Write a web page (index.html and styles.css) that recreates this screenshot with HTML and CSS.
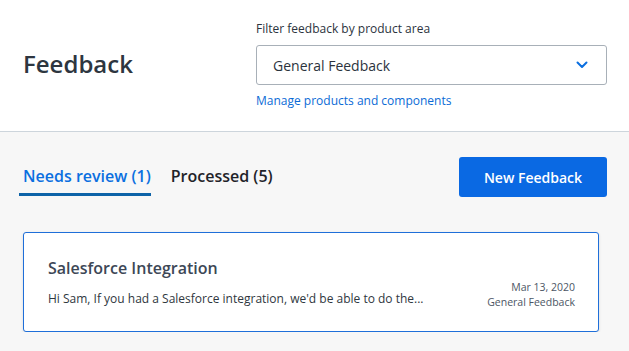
FILE: index.html
```html
<!DOCTYPE html>
<html lang="en">
<head>
  <meta charset="UTF-8">
  <meta name="viewport" content="width=device-width, initial-scale=1.0">
  <title>Feedback</title>
  <link rel="stylesheet" href="styles.css">
</head>
<body>
  <header class="page-header">
    <h1 class="page-title">Feedback</h1>
    <div class="filter">
      <label class="filter-label" for="area">Filter feedback by product area</label>
      <div class="select-box" id="area">
        <span>General Feedback</span>
        <svg class="chevron" width="12" height="8" viewBox="0 0 12 8">
          <path d="M1.5 1.5 L6 6 L10.5 1.5" fill="none" stroke="#0b6fe0" stroke-width="2" stroke-linecap="round" stroke-linejoin="round"/>
        </svg>
      </div>
      <a href="#" class="filter-link">Manage products and components</a>
    </div>
  </header>

  <main class="content">
    <div class="toolbar">
      <nav class="tabs">
        <a href="#" class="tab active">Needs review (1)</a>
        <a href="#" class="tab">Processed (5)</a>
      </nav>
      <button type="button" class="new-btn">New Feedback</button>
    </div>

    <div class="card">
      <div class="card-main">
        <h2 class="card-title">Salesforce Integration</h2>
        <p class="card-text">Hi Sam, If you had a Salesforce integration, we'd be able to do the...</p>
      </div>
      <div class="card-meta">
        <span>Mar 13, 2020</span>
        <span>General Feedback</span>
      </div>
    </div>
  </main>
</body>
</html>
```

FILE: styles.css
```css
body {
  font-family: "Open Sans", "Noto Sans", sans-serif;
  background-color: #f7f7f7;
  margin: 0;
  padding: 0;
  color: #2b333d;
}
.page-header {
  background: #fff;
  height: 131px;
  border-bottom: 1px solid #cdd5dc;
  display: flex;
  align-items: center;
  padding: 0 22px 0 23px;
}
.page-title {
  margin: 0 0 4px;
  font-size: 24px;
  font-weight: 600;
  color: #2d3640;
  width: 233px;
}
.filter {
  flex: 1;
  display: flex;
  flex-direction: column;
  padding-bottom: 1px;
}
.filter-label {
  font-size: 12px;
  line-height: 16px;
  color: #2b333d;
  margin-bottom: 8px;
}
.select-box {
  height: 38px;
  border: 1px solid #a8b0b8;
  border-radius: 3px;
  display: flex;
  align-items: center;
  justify-content: space-between;
  padding: 0 18px 0 16px;
  font-size: 14px;
  color: #2b333d;
}
.filter-link {
  margin-top: 8px;
  font-size: 12px;
  line-height: 16px;
  color: #0b6bd6;
  text-decoration: none;
}
.content {
  padding: 25px 22px 0 23px;
}
.toolbar {
  display: flex;
  justify-content: space-between;
  align-items: flex-start;
  margin-bottom: 35px;
}
.tabs {
  display: flex;
  gap: 20px;
  padding-top: 8px;
}
.tab {
  font-size: 16px;
  font-weight: 600;
  color: #1f2329;
  text-decoration: none;
  line-height: 22px;
  padding-bottom: 6px;
  border-bottom: 3px solid transparent;
}
.tab.active {
  color: #0b6fe0;
  border-bottom-color: #0d63a8;
  margin-left: -4px;
  padding: 0 0 6px 4px;
}
.new-btn {
  width: 148px;
  height: 40px;
  background-color: #0a69e3;
  border: none;
  border-radius: 3px;
  color: #fff;
  font-family: inherit;
  font-size: 14px;
  font-weight: 600;
  cursor: pointer;
}
.card {
  width: 576px;
  height: 100px;
  box-sizing: border-box;
  background: #fff;
  border: 1px solid #1f6fd9;
  border-radius: 3px;
  box-shadow: 0 1px 3px rgba(0,0,0,0.12);
  display: flex;
  justify-content: space-between;
  align-items: flex-end;
  padding: 0 23px 24px 24px;
}
.card-title {
  margin: 0 0 12px;
  font-size: 16px;
  font-weight: 600;
  color: #3d4756;
  line-height: 22px;
}
.card-text {
  margin: 0;
  font-size: 12px;
  line-height: 16px;
  color: #2f3740;
}
.card-meta {
  display: flex;
  flex-direction: column;
  align-items: flex-end;
  font-size: 10.5px;
  line-height: 15px;
  color: #4c5665;
  margin-bottom: -3px;
}
```
